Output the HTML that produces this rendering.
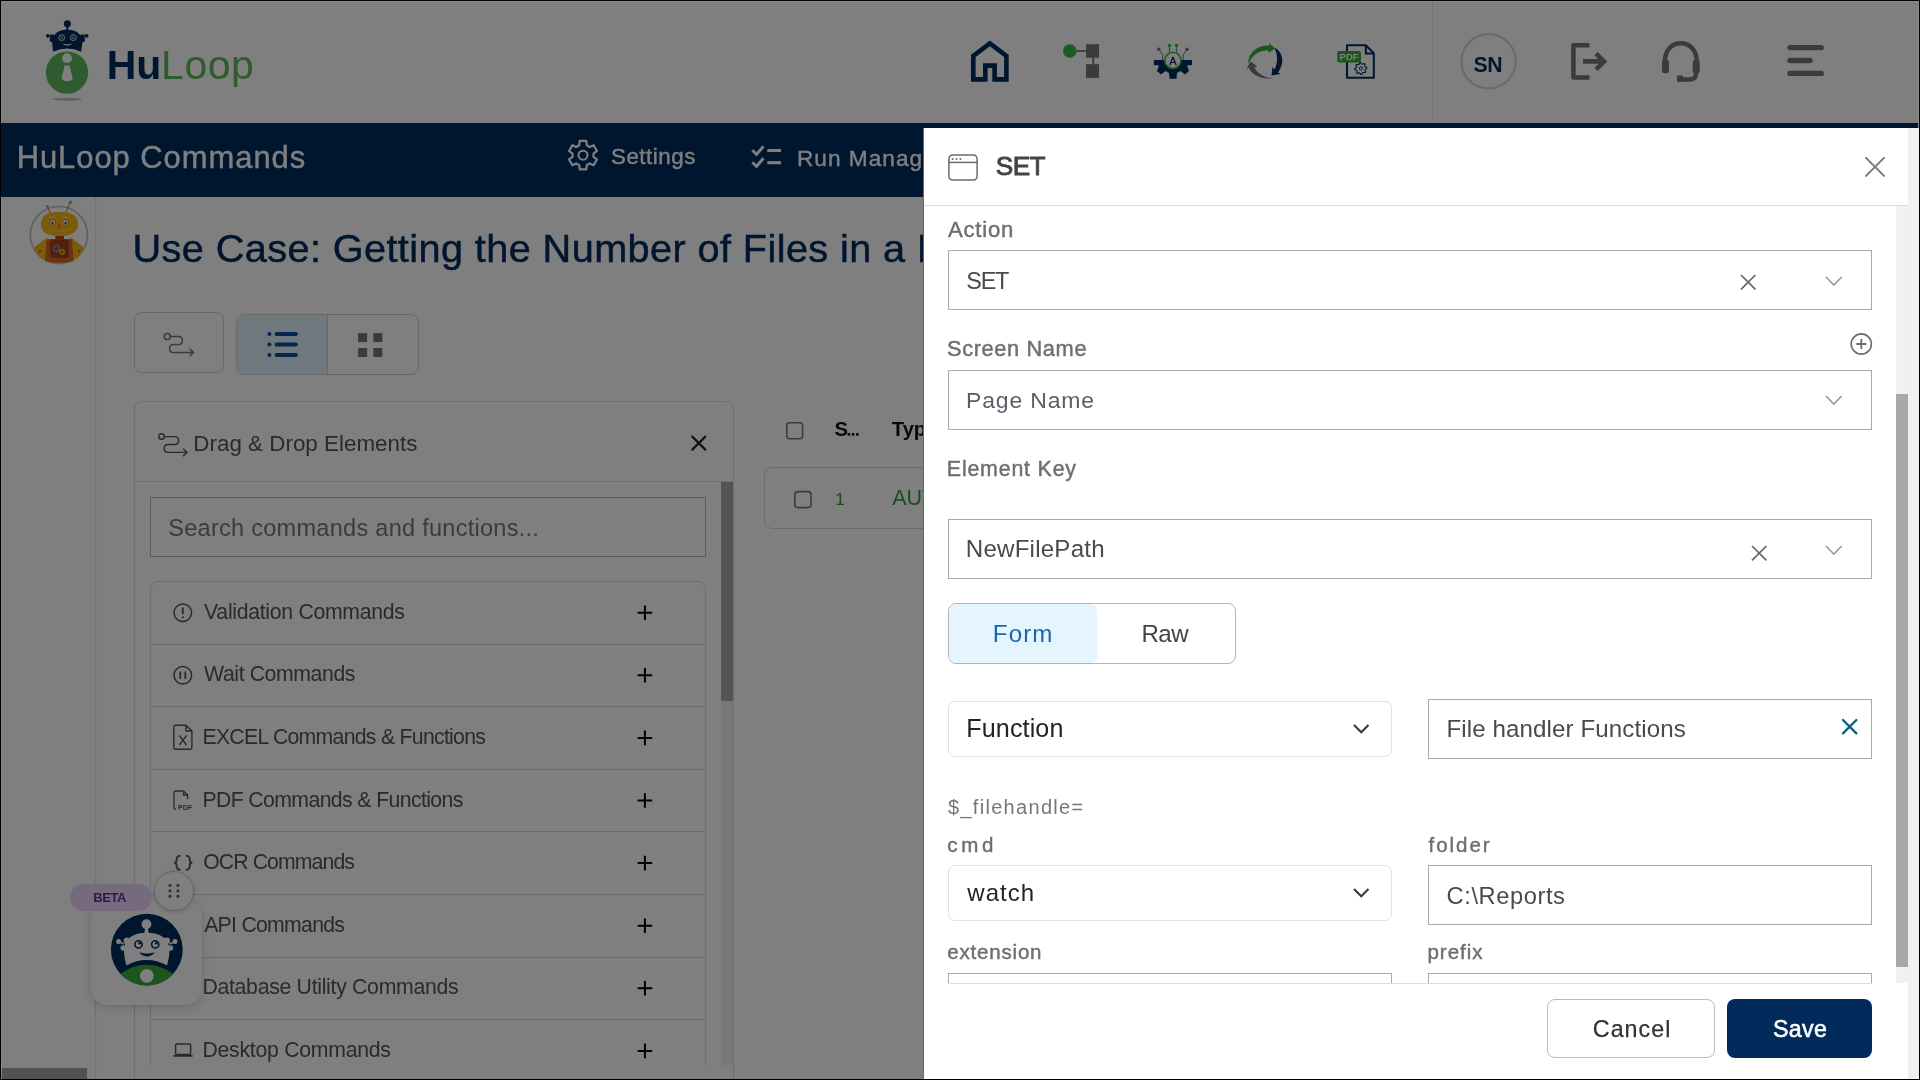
<!DOCTYPE html>
<html><head><meta charset="utf-8"><title>HuLoop Commands</title>
<style>
html,body{margin:0;padding:0;}
body{width:1920px;height:1080px;overflow:hidden;background:#000;position:relative;font-family:"Liberation Sans",sans-serif;--tls:0px;}
#page{position:absolute;left:0;top:0;width:1920px;height:1080px;background:#fff;overflow:hidden;}
.fr{position:absolute;background:#000;}
.b{position:absolute;}
.t{position:absolute;white-space:nowrap;}
svg.s{position:absolute;overflow:visible;}
#ov{position:absolute;left:0;top:0;width:1920px;height:1080px;background:rgba(0,0,0,0.5);}
#modal{position:absolute;left:0;top:0;width:1920px;height:1080px;will-change:transform;}
#page{will-change:transform;}
</style></head><body>
<div id="page">
<div class="b" style="left:1432px;top:1px;width:1px;height:122px;background:#e6e6e6;"></div>
<svg class="s" style="left:40px;top:15px;" width="60" height="90" viewBox="40 15 60 90">
<circle cx="67.3" cy="23.8" r="3.5" fill="#002b5c"/>
<rect x="66.3" y="25" width="2" height="6" fill="#002b5c"/>
<path d="M53 51.7 L52 41 C53 33 60 29.4 67.3 29.4 C74.6 29.4 81.6 33 82.6 41 L81.2 51.7 Q67 45.5 53 51.7 Z" fill="#002b5c"/>
<rect x="49.8" y="34.4" width="4.5" height="7.6" rx="1" fill="#002b5c"/>
<rect x="80.3" y="34.4" width="4.5" height="7.6" rx="1" fill="#002b5c"/>
<circle cx="47.9" cy="35.8" r="1.9" fill="#002b5c"/><circle cx="86.7" cy="35.8" r="1.9" fill="#002b5c"/>
<circle cx="61.7" cy="37.6" r="2.9" fill="none" stroke="#fff" stroke-width="0.9"/>
<circle cx="73.3" cy="37.6" r="2.9" fill="none" stroke="#fff" stroke-width="0.9"/>
<path d="M61.3 36 L61.3 38.4 L63 38.4 M72.9 36 L72.9 38.4 L74.6 38.4" stroke="#fff" stroke-width="0.7" fill="none"/>
<path d="M62 43.6 Q67.3 47.8 72.6 43.6 Q67.3 45.2 62 43.6 Z" fill="#fff"/>
<circle cx="67" cy="72.6" r="21.2" fill="#5cb85c"/>
<circle cx="67.1" cy="58.2" r="4.9" fill="#fff"/>
<path d="M64.6 65.5 L69.6 65.5 L72.6 78 Q72.6 81 67.1 81.2 Q61.6 81 61.6 78 Z" fill="#fff"/>
<ellipse cx="67" cy="99.3" rx="15" ry="1.5" fill="#c4c4c4"/>
</svg>
<div class="t" style="left:106.73px;top:45.00px;font-size:40.99px;line-height:40.99px;color:#002b5c;font-weight:700;">Hu</div>
<div class="t" style="left:161.12px;top:45.00px;font-size:40.99px;line-height:40.99px;color:#5cb85c;letter-spacing:0.475px;">Loop</div>
<svg class="s" style="left:960px;top:30px;" width="60" height="60" viewBox="960 30 60 60"><path d="M973.3 79.4 L985.3 79.4 L985.3 65.6 L994.6 65.6 L994.6 79.4 L1006.4 79.4 L1006.4 56 L989.9 43.5 L973.3 56 Z" fill="none" stroke="#002b5c" stroke-width="4.6" stroke-linejoin="miter"/></svg>
<svg class="s" style="left:1055px;top:35px;" width="55" height="55" viewBox="1055 35 55 55"><rect x="1069" y="50.1" width="18" height="1.8" fill="#777"/>
<circle cx="1069.8" cy="51" r="6.8" fill="#3bb54a"/>
<rect x="1086" y="44.2" width="13" height="13.5" fill="#777"/>
<rect x="1086" y="64.2" width="13" height="13.7" fill="#777"/>
<rect x="1092.3" y="57" width="2" height="8" fill="#777"/></svg>
<svg class="s" style="left:1145px;top:35px;" width="55" height="55" viewBox="1145 35 55 55"><path d="M1153.8 60 L1192 60 L1192 65 L1187 65.5 L1189 71 L1185 74.5 L1180.5 71 L1177 73 L1176.5 78.8 L1169.5 78.8 L1169 73 L1165.5 71 L1161 74.5 L1157 71 L1159 65.5 L1153.8 65 Z" fill="#002b5c"/>
<circle cx="1172.9" cy="60.4" r="8.1" fill="#fff" stroke="#3bb54a" stroke-width="1.6"/>
<text x="1172.9" y="64.6" font-family="Liberation Sans" font-size="11" font-weight="400" fill="#002b5c" text-anchor="middle" stroke="#002b5c" stroke-width="0.3">A</text>
<line x1="1169.5" y1="45.5" x2="1169.5" y2="52.5" stroke="#3bb54a" stroke-width="1.2"/>
<line x1="1176.5" y1="45.5" x2="1176.5" y2="52.5" stroke="#3bb54a" stroke-width="1.2"/>
<circle cx="1169.5" cy="45.5" r="1.7" fill="#3bb54a"/><circle cx="1176.5" cy="45.5" r="1.7" fill="#3bb54a"/>
<path d="M1158.8 49.2 L1162.6 54.8 L1162.6 60" fill="none" stroke="#777" stroke-width="1"/>
<path d="M1187 49.2 L1183.2 54.8 L1183.2 60" fill="none" stroke="#777" stroke-width="1"/>
<circle cx="1158.8" cy="49.2" r="1.7" fill="#777"/><circle cx="1187" cy="49.2" r="1.7" fill="#777"/></svg>
<svg class="s" style="left:1240px;top:35px;" width="50" height="55" viewBox="1240 35 50 55"><path d="M1248 64 C1248 52 1258 45 1269 45.5 L1269 43 L1275 48.5 L1268.5 53 L1268.5 50.2 C1260 50 1252 55 1248 64 Z" fill="#3aad3a"/>
<path d="M1274 47.5 C1282 51 1284 60 1281 67 C1280 69 1279 71 1278 72.5 L1280.5 74 L1271.5 75.5 L1272.5 67 L1274.5 69.5 C1278 63 1278 54 1274 47.5 Z" fill="#002b5c"/>
<path d="M1273 78 C1262 80 1252 75 1249 68 L1246.5 68.5 L1250.7 61.3 L1257.2 66.5 L1254.3 67.2 C1257 73 1264 78 1273 78 Z" fill="#777"/></svg>
<svg class="s" style="left:1335px;top:40px;" width="45" height="45" viewBox="1335 40 45 45"><path d="M1347 45.2 L1365.8 45.2 L1373.8 53.2 L1373.8 77.8 L1347 77.8 Z" fill="none" stroke="#002b5c" stroke-width="2" stroke-linejoin="round"/>
<path d="M1365.8 45.2 L1365.8 53.5 L1373.8 53.5" fill="none" stroke="#002b5c" stroke-width="2"/>
<rect x="1337.2" y="51" width="23.8" height="11.5" rx="2" fill="#3aad3a"/>
<text x="1349.1" y="59.8" font-family="Liberation Sans" font-size="9.5" font-weight="700" fill="#fff" text-anchor="middle">PDF</text>
<path d="M1366.68 67.33 L1366.80 68.50 L1365.31 69.40 L1365.05 70.26 L1365.79 71.83 L1365.04 72.74 L1363.36 72.32 L1362.56 72.75 L1361.97 74.38 L1360.80 74.50 L1359.90 73.01 L1359.04 72.75 L1357.47 73.49 L1356.56 72.74 L1356.98 71.06 L1356.55 70.26 L1354.92 69.67 L1354.80 68.50 L1356.29 67.60 L1356.55 66.74 L1355.81 65.17 L1356.56 64.26 L1358.24 64.68 L1359.04 64.25 L1359.63 62.62 L1360.80 62.50 L1361.70 63.99 L1362.56 64.25 L1364.13 63.51 L1365.04 64.26 L1364.62 65.94 L1365.05 66.74 Z" fill="none" stroke="#002b5c" stroke-width="1.1" stroke-linejoin="round"/>
<circle cx="1360.8" cy="68.5" r="1.6" fill="none" stroke="#002b5c" stroke-width="1"/></svg>
<svg class="s" style="left:1455px;top:28px;" width="68" height="68" viewBox="1455 28 68 68"><circle cx="1488.5" cy="61.3" r="27.1" fill="#fff" stroke="#d6d6d6" stroke-width="2.2"/></svg>
<div class="t" style="left:1473.56px;top:54.00px;font-size:21.22px;line-height:21.22px;color:#002b5c;font-weight:700;letter-spacing:-0.428px;">SN</div>
<svg class="s" style="left:1565px;top:38px;" width="50" height="48" viewBox="1565 38 50 48"><path d="M1589.5 45.3 L1573.4 45.3 L1573.4 77.5 L1589.5 77.5" fill="none" stroke="#777" stroke-width="4.6" stroke-linejoin="round"/>
<path d="M1583 61.4 L1604 61.4 M1596 53.5 L1604 61.4 L1596 69.3" fill="none" stroke="#777" stroke-width="4.6"/></svg>
<svg class="s" style="left:1655px;top:35px;" width="52" height="52" viewBox="1655 35 52 52"><path d="M1665 66 L1665 61 C1665 50 1672 43.3 1680.8 43.3 C1689.6 43.3 1696.6 50 1696.6 61 L1696.6 66" fill="none" stroke="#777" stroke-width="4.6"/>
<rect x="1662" y="60" width="7" height="13.3" rx="2.5" fill="#777"/>
<rect x="1692.7" y="60" width="7" height="13.3" rx="2.5" fill="#777"/>
<path d="M1696 72 L1696 74 C1696 78 1693 79.5 1689 79.5 L1678 79.5" fill="none" stroke="#777" stroke-width="4.4"/>
<rect x="1677" y="75.5" width="6" height="6.3" fill="#777"/></svg>
<svg class="s" style="left:1780px;top:40px;" width="50" height="40" viewBox="1780 40 50 40"><line x1="1790" y1="47.6" x2="1821.2" y2="47.6" stroke="#777" stroke-width="5.4" stroke-linecap="round"/>
<line x1="1790" y1="60.5" x2="1810" y2="60.5" stroke="#777" stroke-width="5.4" stroke-linecap="round"/>
<line x1="1790" y1="73.4" x2="1821.2" y2="73.4" stroke="#777" stroke-width="5.4" stroke-linecap="round"/></svg>
<div class="b" style="left:1px;top:123px;width:1918px;height:74px;background:#002b5c;"></div>
<div class="t" style="left:16.65px;top:143.00px;font-size:30.96px;line-height:30.96px;color:#fff;letter-spacing:0.947px;-webkit-text-stroke:0.35px #fff;">HuLoop Commands</div>
<svg class="s" style="left:565px;top:136px;" width="36" height="38" viewBox="565 136 36 38"><path d="M579.20 145.30 L579.72 140.97 L586.28 140.97 L586.80 145.30 L589.67 146.96 L593.68 145.24 L596.96 150.93 L593.47 153.54 L593.47 156.86 L596.96 159.47 L593.68 165.16 L589.67 163.44 L586.80 165.10 L586.28 169.43 L579.72 169.43 L579.20 165.10 L576.33 163.44 L572.32 165.16 L569.04 159.47 L572.53 156.86 L572.53 153.54 L569.04 150.93 L572.32 145.24 L576.33 146.96 Z" fill="none" stroke="#fff" stroke-width="2.2" stroke-linejoin="round"/>
<circle cx="583" cy="155.2" r="4.5" fill="none" stroke="#fff" stroke-width="2.1"/></svg>
<div class="t" style="left:610.99px;top:146.00px;font-size:22.38px;line-height:22.38px;color:#fff;letter-spacing:0.504px;-webkit-text-stroke:0.35px #fff;">Settings</div>
<svg class="s" style="left:748px;top:140px;" width="38" height="30" viewBox="748 140 38 30"><path d="M752.3 150.3 L756.5 154.3 L763.5 146.3" fill="none" stroke="#fff" stroke-width="2.9"/>
<path d="M752.3 162.3 L756.5 166.3 L763.5 158.3" fill="none" stroke="#fff" stroke-width="2.9"/>
<line x1="767.3" y1="150.5" x2="781" y2="150.5" stroke="#fff" stroke-width="3.1"/>
<line x1="767.3" y1="162.7" x2="781" y2="162.7" stroke="#fff" stroke-width="3.1"/></svg>
<div class="t" style="left:796.93px;top:147.00px;font-size:22.67px;line-height:22.67px;color:#fff;letter-spacing:1.008px;-webkit-text-stroke:0.35px #fff;">Run Management</div>
<div class="b" style="left:95px;top:197px;width:1px;height:882px;background:#e4e4e4;box-shadow:1px 0 3px rgba(0,0,0,0.08);"></div>
<svg class="s" style="left:25px;top:200px;" width="70" height="70" viewBox="25 200 70 70"><circle cx="58.9" cy="235" r="28.6" fill="#fff" stroke="#c2c2c2" stroke-width="1.8"/>
<line x1="47.5" y1="206.5" x2="50" y2="213" stroke="#d2691e" stroke-width="1"/>
<line x1="70.3" y1="202.5" x2="65.5" y2="213" stroke="#d2691e" stroke-width="1"/>
<circle cx="47.3" cy="206.3" r="1.6" fill="#5bc0de"/><circle cx="70.5" cy="202.3" r="1.8" fill="#5bc0de"/>
<path d="M34 247.5 L47 237.5 L51 244 L50 262 L40 258 Z" fill="#f5b816"/>
<path d="M84 247.5 L71 237.5 L67 244 L68 262 L78 258 Z" fill="#f5b816"/>
<rect x="55.3" y="235.5" width="8.6" height="4" fill="#b8401a"/>
<path d="M48.5 239 L69.5 239 Q72 239 72.3 242 L73.5 261 Q59 265 45 261 L46.2 242 Q46.5 239 48.5 239 Z" fill="#d2691e"/>
<rect x="50.3" y="239.5" width="18.5" height="18.5" rx="3" fill="#a83e18"/>
<path d="M41 225 C41 214 49 212 59.5 212 C70 212 78 214 78 225 C78 233 70 236 59.5 236 C49 236 41 233 41 225 Z" fill="#f5b816"/>
<rect x="49.2" y="216.3" width="6.5" height="1.6" fill="#f7d16a"/><rect x="62" y="216.3" width="6.5" height="1.6" fill="#f7d16a"/>
<circle cx="52.5" cy="222.5" r="2.7" fill="#fff" stroke="#d2691e" stroke-width="0.7"/>
<circle cx="65.5" cy="222.5" r="2.7" fill="#fff" stroke="#d2691e" stroke-width="0.7"/>
<circle cx="52.5" cy="223" r="1.1" fill="#002b5c"/><circle cx="65.5" cy="223" r="1.1" fill="#002b5c"/>
<rect x="58.6" y="224.5" width="1.3" height="3.2" fill="#c0501c"/>
<path d="M48 229.5 Q59 233 71 229.5" stroke="#f7d16a" stroke-width="0.9" fill="none"/>
<circle cx="56.5" cy="248.5" r="3" fill="none" stroke="#5bc0de" stroke-width="1.8" stroke-dasharray="1.3 0.7"/>
<circle cx="62.3" cy="252" r="2" fill="none" stroke="#f5b816" stroke-width="1.4"/>
<circle cx="40" cy="251" r="1.5" fill="#d2691e"/><circle cx="79" cy="251" r="1.5" fill="#d2691e"/></svg>
<div class="t" style="left:132.52px;top:229.00px;font-size:39.68px;line-height:39.68px;color:#002b5c;letter-spacing:0.399px;-webkit-text-stroke:0.5px #002b5c;">Use Case: Getting the Number of Files in a Directory</div>
<div class="b" style="left:134px;top:312px;width:90px;height:61px;border:1px solid #d0d0d0;border-radius:8px;box-sizing:border-box;"></div>
<svg class="s" style="left:160px;top:330px;" width="40" height="30" viewBox="160 330 40 30"><circle cx="167.3" cy="336.4" r="3" fill="none" stroke="#777" stroke-width="1.5"/>
<path d="M170.3 336.6 L179 336.6 C183 336.6 184 344.5 179 344.5 L173 344.5 C168.5 344.5 168.5 352.4 173 352.4 L193.5 352.4 M190 349 L193.5 352.4 L190 355.8" fill="none" stroke="#777" stroke-width="1.5" stroke-linecap="round"/></svg>
<div class="b" style="left:236px;top:314px;width:183px;height:61px;border:1px solid #d0d0d0;border-radius:8px;box-sizing:border-box;overflow:hidden;"></div>
<div class="b" style="left:237px;top:315px;width:90px;height:59px;background:#dff1fb;border-radius:7px 0 0 7px;"></div>
<div class="b" style="left:327px;top:315px;width:1px;height:59px;background:#d0d0d0;"></div>
<svg class="s" style="left:262px;top:328px;" width="42" height="32" viewBox="262 328 42 32"><circle cx="269.4" cy="334" r="2" fill="#0b4f9c"/><circle cx="269.4" cy="344.5" r="2" fill="#0b4f9c"/><circle cx="269.4" cy="355" r="2" fill="#0b4f9c"/>
<line x1="276.5" y1="334" x2="296" y2="334" stroke="#0b4f9c" stroke-width="3.8" stroke-linecap="round"/>
<line x1="276.5" y1="344.5" x2="296" y2="344.5" stroke="#0b4f9c" stroke-width="3.8" stroke-linecap="round"/>
<line x1="276.5" y1="355" x2="296" y2="355" stroke="#0b4f9c" stroke-width="3.8" stroke-linecap="round"/></svg>
<svg class="s" style="left:355px;top:330px;" width="30" height="30" viewBox="355 330 30 30"><rect x="358.1" y="333.1" width="9" height="9" fill="#777"/><rect x="373.3" y="333.1" width="9" height="9" fill="#777"/>
<rect x="358.1" y="348" width="9" height="9" fill="#777"/><rect x="373.3" y="348" width="9" height="9" fill="#777"/></svg>
<div class="b" style="left:134px;top:401px;width:600px;height:699px;border:1px solid #dcdcdc;border-radius:8px;box-sizing:border-box;"></div>
<div class="b" style="left:135px;top:481px;width:598px;height:1px;background:#dcdcdc;"></div>
<svg class="s" style="left:155px;top:428px;" width="38" height="32" viewBox="155 428 38 32"><circle cx="161.5" cy="436.5" r="2.8" fill="none" stroke="#555" stroke-width="1.4"/>
<path d="M164.3 436.6 L175 436.6 C179.5 436.6 180 444.5 175 444.5 L168 444.5 C163 444.5 163 452.4 168 452.4 L187 452.4 M183.5 449 L187 452.4 L183.5 455.8" fill="none" stroke="#555" stroke-width="1.4" stroke-linecap="round"/></svg>
<div class="t" style="left:193.35px;top:433.00px;font-size:22.38px;line-height:22.38px;color:#555;letter-spacing:0.010px;">Drag &amp; Drop Elements</div>
<svg class="s" style="left:688px;top:433px;" width="22" height="22" viewBox="688 433 22 22"><path d="M692.3 436.6 L705.3 449.6 M705.3 436.6 L692.3 449.6" stroke="#222" stroke-width="2.2" stroke-linecap="round"/></svg>
<div class="b" style="left:721px;top:482px;width:12px;height:583px;background:#f1f1f1;"></div>
<div class="b" style="left:721px;top:482px;width:12px;height:219px;background:#a8a8a8;"></div>
<div class="b" style="left:150px;top:497px;width:556px;height:60px;border:1px solid #b8b8b8;box-sizing:border-box;"></div>
<div class="t" style="left:168.24px;top:517.00px;font-size:23.55px;line-height:23.55px;color:#777;letter-spacing:0.262px;">Search commands and functions...</div>
<div class="b" style="left:150px;top:581px;width:556px;height:484px;overflow:hidden;">
<div class="b" style="left:0;top:0;width:556px;height:600px;border:1px solid #d8dce0;border-radius:8px;box-sizing:border-box;"></div>
<div class="t" style="left:54.09px;top:20.00px;font-size:21.22px;line-height:21.22px;color:#555;letter-spacing:-0.289px;">Validation Commands</div>
<svg class="s" style="left:480px;top:17px;" width="30" height="30" viewBox="480 17 30 30"><path d="M487.6 31.70 L502.2 31.70 M494.9 24.40 L494.9 39.00" stroke="#000" stroke-width="2"/></svg>
<div class="b" style="left:1px;top:63px;width:554px;height:1px;background:#d6d6d6;"></div>
<div class="t" style="left:54.09px;top:82.00px;font-size:21.22px;line-height:21.22px;color:#555;letter-spacing:-0.390px;">Wait Commands</div>
<svg class="s" style="left:480px;top:80px;" width="30" height="30" viewBox="480 80 30 30"><path d="M487.6 94.30 L502.2 94.30 M494.9 87.00 L494.9 101.60" stroke="#000" stroke-width="2"/></svg>
<div class="b" style="left:1px;top:125px;width:554px;height:1px;background:#d6d6d6;"></div>
<div class="t" style="left:52.45px;top:145.00px;font-size:21.22px;line-height:21.22px;color:#555;letter-spacing:-0.707px;">EXCEL Commands &amp; Functions</div>
<svg class="s" style="left:480px;top:142px;" width="30" height="30" viewBox="480 142 30 30"><path d="M487.6 156.90 L502.2 156.90 M494.9 149.60 L494.9 164.20" stroke="#000" stroke-width="2"/></svg>
<div class="b" style="left:1px;top:188px;width:554px;height:1px;background:#d6d6d6;"></div>
<div class="t" style="left:52.45px;top:208.00px;font-size:21.22px;line-height:21.22px;color:#555;letter-spacing:-0.601px;">PDF Commands &amp; Functions</div>
<svg class="s" style="left:480px;top:205px;" width="30" height="30" viewBox="480 205 30 30"><path d="M487.6 219.50 L502.2 219.50 M494.9 212.20 L494.9 226.80" stroke="#000" stroke-width="2"/></svg>
<div class="b" style="left:1px;top:250px;width:554px;height:1px;background:#d6d6d6;"></div>
<div class="t" style="left:53.19px;top:270.00px;font-size:21.22px;line-height:21.22px;color:#555;letter-spacing:-0.890px;">OCR Commands</div>
<svg class="s" style="left:480px;top:268px;" width="30" height="30" viewBox="480 268 30 30"><path d="M487.6 282.10 L502.2 282.10 M494.9 274.80 L494.9 289.40" stroke="#000" stroke-width="2"/></svg>
<div class="b" style="left:1px;top:313px;width:554px;height:1px;background:#d6d6d6;"></div>
<div class="t" style="left:54.15px;top:333.00px;font-size:21.22px;line-height:21.22px;color:#555;letter-spacing:-0.709px;">API Commands</div>
<svg class="s" style="left:480px;top:330px;" width="30" height="30" viewBox="480 330 30 30"><path d="M487.6 344.70 L502.2 344.70 M494.9 337.40 L494.9 352.00" stroke="#000" stroke-width="2"/></svg>
<div class="b" style="left:1px;top:376px;width:554px;height:1px;background:#d6d6d6;"></div>
<div class="t" style="left:52.45px;top:395.00px;font-size:21.22px;line-height:21.22px;color:#555;letter-spacing:-0.285px;">Database Utility Commands</div>
<svg class="s" style="left:480px;top:393px;" width="30" height="30" viewBox="480 393 30 30"><path d="M487.6 407.30 L502.2 407.30 M494.9 400.00 L494.9 414.60" stroke="#000" stroke-width="2"/></svg>
<div class="b" style="left:1px;top:438px;width:554px;height:1px;background:#d6d6d6;"></div>
<div class="t" style="left:52.45px;top:458.00px;font-size:21.22px;line-height:21.22px;color:#555;letter-spacing:-0.251px;">Desktop Commands</div>
<svg class="s" style="left:480px;top:455px;" width="30" height="30" viewBox="480 455 30 30"><path d="M487.6 469.90 L502.2 469.90 M494.9 462.60 L494.9 477.20" stroke="#000" stroke-width="2"/></svg>
</div>
<svg class="s" style="left:170px;top:600px;" width="26" height="26" viewBox="170 600 26 26"><circle cx="182.8" cy="612.8" r="8.8" fill="none" stroke="#555" stroke-width="1.5"/><line x1="182.8" y1="607.5" x2="182.8" y2="614" stroke="#555" stroke-width="1.8"/><circle cx="182.8" cy="617.3" r="1.1" fill="#555"/></svg>
<svg class="s" style="left:170px;top:662px;" width="26" height="26" viewBox="170 662 26 26"><circle cx="182.8" cy="675.2" r="8.8" fill="none" stroke="#555" stroke-width="1.5"/><line x1="180.3" y1="671.5" x2="180.3" y2="679" stroke="#555" stroke-width="1.8"/><line x1="185.3" y1="671.5" x2="185.3" y2="679" stroke="#555" stroke-width="1.8"/></svg>
<svg class="s" style="left:170px;top:720px;" width="26" height="34" viewBox="170 720 26 34"><path d="M175.5 725.2 L186 725.2 L191.9 731 L191.9 747.5 Q191.9 749.3 190 749.3 L175.5 749.3 Q173.8 749.3 173.8 747.5 L173.8 727 Q173.8 725.2 175.5 725.2 Z M186 725.2 L186 731 L191.9 731" fill="none" stroke="#555" stroke-width="1.4" stroke-linejoin="round"/><path d="M179.3 735.5 L186.5 745 M186.5 735.5 L179.3 745" stroke="#555" stroke-width="1.3"/></svg>
<svg class="s" style="left:170px;top:786px;" width="28" height="28" viewBox="170 786 28 28"><path d="M176 809.3 Q174 809.3 174 807.3 L174 793 Q174 791 176 791 L183.6 791 L187.6 795 L187.6 799 M183.6 791 L183.6 795 L187.6 795" fill="none" stroke="#555" stroke-width="1.3" stroke-linejoin="round"/><text x="185" y="810" font-family="Liberation Sans" font-size="7" font-weight="700" fill="#555" text-anchor="middle">PDF</text></svg>
<svg class="s" style="left:170px;top:850px;" width="28" height="26" viewBox="170 850 28 26"><path d="M179.8 855.9 C176.8 855.9 176.6 857.6 176.6 860 C176.6 862.1 175.6 862.8 174.1 862.8 C175.6 862.8 176.6 863.5 176.6 865.6 C176.6 868 176.8 869.7 179.8 869.7 M186.6 855.9 C189.6 855.9 189.8 857.6 189.8 860 C189.8 862.1 190.8 862.8 192.3 862.8 C190.8 862.8 189.8 863.5 189.8 865.6 C189.8 868 189.6 869.7 186.6 869.7" fill="none" stroke="#555" stroke-width="1.9" stroke-linecap="round"/></svg>
<svg class="s" style="left:170px;top:1038px;" width="28" height="24" viewBox="170 1038 28 24"><rect x="175.6" y="1044" width="15" height="10.5" rx="1" fill="none" stroke="#555" stroke-width="1.5"/><rect x="173.3" y="1055" width="19.4" height="1.8" rx="0.6" fill="#555"/></svg>
<svg class="s" style="left:783px;top:419px;" width="24" height="24" viewBox="783 419 24 24"><rect x="786.8" y="422.8" width="15.8" height="16" rx="3" fill="#fff" stroke="#777" stroke-width="1.6"/></svg>
<div class="t" style="left:834.59px;top:419.00px;font-size:20.20px;line-height:20.20px;color:#111;font-weight:700;">S</div>
<svg class="s" style="left:845px;top:430px;" width="16" height="8" viewBox="845 430 16 8"><rect x="847.6" y="433" width="2.6" height="2.7" fill="#111"/><rect x="851.8" y="433" width="2.6" height="2.7" fill="#111"/><rect x="856" y="433" width="2.6" height="2.7" fill="#111"/></svg>
<div class="t" style="left:891.80px;top:419.00px;font-size:20.20px;line-height:20.20px;color:#111;font-weight:700;">Type</div>
<div class="b" style="left:764px;top:467px;width:336px;height:62px;border:1px solid #d6d6d6;border-radius:8px;box-sizing:border-box;"></div>
<svg class="s" style="left:791px;top:487px;" width="24" height="24" viewBox="791 487 24 24"><rect x="794.8" y="491.6" width="16.2" height="16" rx="3" fill="#fff" stroke="#777" stroke-width="1.6"/></svg>
<div class="t" style="left:835.21px;top:491.00px;font-size:17.15px;line-height:17.15px;color:#2e9b3e;">1</div>
<div class="t" style="left:892.25px;top:488.00px;font-size:21.51px;line-height:21.51px;color:#2e9b3e;">AUTO</div>
<div class="b" style="left:91px;top:900px;width:111px;height:105px;background:#fff;border-radius:16px;box-shadow:0 2px 10px rgba(0,0,0,0.18);"></div>
<div class="b" style="left:70px;top:884px;width:82px;height:27px;background:#ecd7fa;border-radius:14px;"></div>
<div class="t" style="left:93.32px;top:891.00px;font-size:13.08px;line-height:13.08px;color:#6a2ca8;font-weight:700;letter-spacing:-0.463px;">BETA</div>
<div class="b" style="left:154px;top:871px;width:40px;height:40px;background:#fff;border-radius:50%;border:1px solid #cfcfcf;box-sizing:border-box;box-shadow:0 1px 4px rgba(0,0,0,0.2);"></div>
<svg class="s" style="left:165px;top:882px;" width="18" height="18" viewBox="165 882 18 18"><circle cx="170" cy="885.3" r="1.6" fill="#666"/><circle cx="177.9" cy="885.3" r="1.6" fill="#666"/><circle cx="170" cy="890.8" r="1.6" fill="#666"/><circle cx="177.9" cy="890.8" r="1.6" fill="#666"/><circle cx="170" cy="896.3" r="1.6" fill="#666"/><circle cx="177.9" cy="896.3" r="1.6" fill="#666"/></svg>
<svg class="s" style="left:108px;top:911px;" width="78" height="78" viewBox="108 911 78 78"><defs><clipPath id="bc"><circle cx="146.8" cy="949.6" r="35.9"/></clipPath></defs>
<circle cx="146.8" cy="949.6" r="35.9" fill="#002b5c"/>
<g clip-path="url(#bc)">
<circle cx="146.5" cy="924.2" r="4.9" fill="#fff"/>
<path d="M145.5 927 L147.5 927 L149 934 L144 934 Z" fill="#fff"/>
<path d="M126.5 965.5 C124 957 123.5 950 124.5 946 C127 937 135 932.8 146.8 932.8 C158.6 932.8 166.5 937 169 946 C170 950 169.5 957 167 965.5 C160 961.5 153.5 960 146.8 960 C140 960 133.5 961.5 126.5 965.5 Z" fill="#fff"/>
<circle cx="126.8" cy="940.8" r="3.2" fill="#fff"/><circle cx="166.8" cy="940.8" r="3.2" fill="#fff"/>
<circle cx="123.2" cy="948" r="2.8" fill="#fff"/><circle cx="170.4" cy="948" r="2.8" fill="#fff"/>
<circle cx="118.6" cy="941.6" r="2.5" fill="#fff"/><circle cx="175" cy="941.6" r="2.5" fill="#fff"/>
<path d="M118.6 941.6 L124 944 M175 941.6 L169.6 944" stroke="#fff" stroke-width="1.6"/>
<circle cx="138.5" cy="944.4" r="3.6" fill="none" stroke="#002b5c" stroke-width="1.6"/>
<circle cx="155.2" cy="944.4" r="3.6" fill="none" stroke="#002b5c" stroke-width="1.6"/>
<circle cx="139.6" cy="943.3" r="1.3" fill="#002b5c"/><circle cx="156.3" cy="943.3" r="1.3" fill="#002b5c"/>
<path d="M139.9 953 Q147.1 959.3 154.3 953 Q147.1 955.2 139.9 953 Z" fill="#002b5c" stroke="#002b5c" stroke-width="0.8"/>
<path d="M105 992 C115 975 130 964.7 146.8 964.7 C163.5 964.7 178.5 975 188.5 992 Z" fill="#3aad3a"/>
<circle cx="146.8" cy="975.8" r="6.9" fill="#fff"/>
</g></svg>
<div class="b" style="left:1px;top:1068px;width:86px;height:11px;background:#a5a5a5;"></div>
</div>
<div id="ov"></div>
<div class="b" style="left:1px;top:1px;width:1918px;height:1px;background:#8b8b8b;"></div>
<div class="b" style="left:1px;top:1px;width:1px;height:122px;background:#868686;"></div>
<div class="b" style="left:1px;top:197px;width:1px;height:882px;background:#868686;"></div>
<div class="b" style="left:1918px;top:1px;width:1px;height:127px;background:#8b8b8b;"></div>
<div id="modal">
<div class="b" style="left:923px;top:128px;width:1px;height:951px;background:#676767;"></div>
<div class="b" style="left:924px;top:128px;width:995px;height:951px;background:#fff;"></div>
<div class="b" style="left:1908px;top:128px;width:11px;height:951px;background:#f0f0f0;"></div>
<div class="b" style="left:924px;top:205px;width:984px;height:1px;background:#dedede;"></div>
<svg class="s" style="left:945px;top:150px;" width="36" height="34" viewBox="945 150 36 34"><rect x="948.9" y="154.9" width="28.2" height="25.2" rx="3.8" fill="none" stroke="#6a6a6a" stroke-width="1.5"/><line x1="948.9" y1="162.4" x2="977.1" y2="162.4" stroke="#6a6a6a" stroke-width="1.5"/><circle cx="952.6" cy="159" r="0.95" fill="#6a6a6a"/><circle cx="956.5" cy="159" r="0.95" fill="#6a6a6a"/><circle cx="960.4" cy="159" r="0.95" fill="#6a6a6a"/></svg>
<div class="t" style="left:995.82px;top:153.00px;font-size:26.16px;line-height:26.16px;color:#444;letter-spacing:-0.560px;-webkit-text-stroke:0.9px #444;">SET</div>
<svg class="s" style="left:1860px;top:152px;" width="30" height="30" viewBox="1860 152 30 30"><path d="M1866 157.9 L1884 175.9 M1884 157.9 L1866 175.9" stroke="#7a7a7a" stroke-width="2" stroke-linecap="round"/></svg>
<div class="b" style="left:1896px;top:206px;width:12px;height:777px;background:#f1f1f1;"></div>
<div class="b" style="left:1896px;top:394px;width:12px;height:573px;background:#a8a8a8;"></div>
<div class="t" style="left:947.94px;top:219.00px;font-size:22.09px;line-height:22.09px;color:#6f6f6f;letter-spacing:0.815px;-webkit-text-stroke:0.45px #6f6f6f;">Action</div>
<div class="b" style="left:948px;top:250px;width:924px;height:60px;border:1px solid #aaa;box-sizing:border-box;"></div>
<div class="t" style="left:966.25px;top:270.00px;font-size:23.40px;line-height:23.40px;color:#4a4a4a;letter-spacing:-1.218px;">SET</div>
<svg class="s" style="left:1737.7px;top:271.90000000000003px;" width="20.4" height="20.4" viewBox="1737.7 271.90000000000003 20.4 20.4"><path d="M1740.7 274.90000000000003 L1755.1000000000001 289.3 M1755.1000000000001 274.90000000000003 L1740.7 289.3" stroke="#666" stroke-width="1.7" stroke-linecap="butt"/></svg>
<svg class="s" style="left:1823px;top:273.5px;" width="21.700000000000045" height="14.0" viewBox="1823 273.5 21.700000000000045 14.0"><path d="M1826 276.5 L1833.85 284.5 L1841.7 276.5" fill="none" stroke="#999" stroke-width="1.6"/></svg>
<div class="t" style="left:947.02px;top:338.00px;font-size:21.80px;line-height:21.80px;color:#6f6f6f;letter-spacing:0.624px;-webkit-text-stroke:0.45px #6f6f6f;">Screen Name</div>
<svg class="s" style="left:1846px;top:329px;" width="30" height="30" viewBox="1846 329 30 30"><circle cx="1861.3" cy="344" r="10.1" fill="none" stroke="#6b6b6b" stroke-width="1.6"/><path d="M1856.3 344 L1866.3 344 M1861.3 339 L1861.3 349" stroke="#6b6b6b" stroke-width="1.8"/></svg>
<div class="b" style="left:948px;top:370px;width:924px;height:60px;border:1px solid #aaa;box-sizing:border-box;"></div>
<div class="t" style="left:966.11px;top:389.00px;font-size:22.97px;line-height:22.97px;color:#5a5f66;letter-spacing:0.827px;">Page Name</div>
<svg class="s" style="left:1823px;top:392.5px;" width="21.700000000000045" height="14.0" viewBox="1823 392.5 21.700000000000045 14.0"><path d="M1826 395.5 L1833.85 403.5 L1841.7 395.5" fill="none" stroke="#999" stroke-width="1.6"/></svg>
<div class="t" style="left:946.84px;top:459.00px;font-size:21.37px;line-height:21.37px;color:#6f6f6f;letter-spacing:0.807px;-webkit-text-stroke:0.45px #6f6f6f;">Element Key</div>
<div class="b" style="left:948px;top:519px;width:924px;height:60px;border:1px solid #aaa;box-sizing:border-box;"></div>
<div class="t" style="left:965.81px;top:537.00px;font-size:24.13px;line-height:24.13px;color:#4a4a4a;letter-spacing:0.205px;">NewFilePath</div>
<svg class="s" style="left:1748.5px;top:542.9px;" width="20.4" height="20.4" viewBox="1748.5 542.9 20.4 20.4"><path d="M1751.5 545.9 L1765.9 560.3000000000001 M1765.9 545.9 L1751.5 560.3000000000001" stroke="#666" stroke-width="1.7" stroke-linecap="butt"/></svg>
<svg class="s" style="left:1823px;top:542.5px;" width="21.700000000000045" height="14.0" viewBox="1823 542.5 21.700000000000045 14.0"><path d="M1826 545.5 L1833.85 553.5 L1841.7 545.5" fill="none" stroke="#999" stroke-width="1.6"/></svg>
<div class="b" style="left:948px;top:603px;width:288px;height:61px;border:1px solid #b5b5b5;border-radius:8px;box-sizing:border-box;"></div>
<div class="b" style="left:949px;top:604px;width:148px;height:59px;background:#e5f5fd;border-radius:7px 6px 6px 7px;"></div>
<div class="t" style="left:992.81px;top:622.00px;font-size:24.13px;line-height:24.13px;color:#1a64b4;letter-spacing:1.094px;">Form</div>
<div class="t" style="left:1141.41px;top:622.00px;font-size:24.13px;line-height:24.13px;color:#444;letter-spacing:-0.463px;">Raw</div>
<div class="b" style="left:948px;top:701px;width:444px;height:56px;border:1px solid #dee2e6;border-radius:7px;box-sizing:border-box;"></div>
<div class="t" style="left:966.33px;top:716.00px;font-size:25.15px;line-height:25.15px;color:#212529;letter-spacing:0.088px;">Function</div>
<svg class="s" style="left:1350.8px;top:722.2px;" width="20.5" height="13.199999999999932" viewBox="1350.8 722.2 20.5 13.199999999999932"><path d="M1353.8 725.2 L1361.05 732.4 L1368.3 725.2" fill="none" stroke="#343a40" stroke-width="2.1"/></svg>
<div class="b" style="left:1428px;top:699px;width:444px;height:60px;border:1px solid #aaa;box-sizing:border-box;"></div>
<div class="t" style="left:1446.41px;top:717.00px;font-size:24.13px;line-height:24.13px;color:#4a4a4a;letter-spacing:0.096px;">File handler Functions</div>
<svg class="s" style="left:1840.1px;top:716.5px;" width="19.4" height="19.4" viewBox="1840.1 716.5 19.4 19.4"><path d="M1843.1 719.5 L1856.5 732.9000000000001 M1856.5 719.5 L1843.1 732.9000000000001" stroke="#0b5e80" stroke-width="2.3" stroke-linecap="round"/></svg>
<div class="t" style="left:948.00px;top:797.00px;font-size:20.00px;line-height:20.00px;color:#777;letter-spacing:1.300px;">$_filehandle=</div>
<div class="t" style="left:947.33px;top:835.00px;font-size:20.50px;line-height:20.50px;color:#6f6f6f;letter-spacing:3.729px;-webkit-text-stroke:0.45px #6f6f6f;">cmd</div>
<div class="t" style="left:1428.49px;top:835.00px;font-size:20.50px;line-height:20.50px;color:#6f6f6f;letter-spacing:1.973px;-webkit-text-stroke:0.45px #6f6f6f;">folder</div>
<div class="b" style="left:948px;top:865px;width:444px;height:56px;border:1px solid #dee2e6;border-radius:7px;box-sizing:border-box;"></div>
<div class="t" style="left:967.26px;top:881.00px;font-size:24.00px;line-height:24.00px;color:#212529;letter-spacing:1.050px;">watch</div>
<svg class="s" style="left:1350.8px;top:886px;" width="20.5" height="13.200000000000045" viewBox="1350.8 886 20.5 13.200000000000045"><path d="M1353.8 889 L1361.05 896.2 L1368.3 889" fill="none" stroke="#343a40" stroke-width="2.1"/></svg>
<div class="b" style="left:1428px;top:865px;width:444px;height:60px;border:1px solid #aaa;box-sizing:border-box;"></div>
<div class="t" style="left:1446.62px;top:885.00px;font-size:23.69px;line-height:23.69px;color:#4a4a4a;letter-spacing:0.563px;">C:\Reports</div>
<div class="t" style="left:947.33px;top:942.00px;font-size:20.50px;line-height:20.50px;color:#6f6f6f;letter-spacing:0.802px;-webkit-text-stroke:0.45px #6f6f6f;">extension</div>
<div class="t" style="left:1427.47px;top:942.00px;font-size:20.50px;line-height:20.50px;color:#6f6f6f;letter-spacing:0.993px;-webkit-text-stroke:0.45px #6f6f6f;">prefix</div>
<div class="b" style="left:924px;top:973px;width:972px;height:11px;overflow:hidden;"><div class="b" style="left:24px;top:0px;width:444px;height:60px;border:1px solid #aaa;box-sizing:border-box;"></div>
<div class="b" style="left:504px;top:0px;width:444px;height:60px;border:1px solid #aaa;box-sizing:border-box;"></div>
</div>
<div class="b" style="left:948px;top:983px;width:924px;height:1px;background:#dedede;"></div>
<div class="b" style="left:1547px;top:999px;width:168px;height:59px;border:1px solid #bbb;border-radius:8px;box-sizing:border-box;"></div>
<div class="t" style="left:1592.84px;top:1018.00px;font-size:23.26px;line-height:23.26px;color:#333;letter-spacing:1.030px;-webkit-text-stroke:0.25px #333;">Cancel</div>
<div class="b" style="left:1727px;top:999px;width:145px;height:59px;background:#022b5c;border-radius:8px;"></div>
<div class="t" style="left:1772.95px;top:1018.00px;font-size:23.26px;line-height:23.26px;color:#fff;letter-spacing:0.357px;-webkit-text-stroke:0.55px #fff;">Save</div>
</div>
<div class="fr" style="left:0;top:0;width:1920px;height:1px"></div><div class="fr" style="left:0;top:1079px;width:1920px;height:1px"></div><div class="fr" style="left:0;top:0;width:1px;height:1080px"></div><div class="fr" style="left:1919px;top:0;width:1px;height:1080px"></div>
</body></html>
